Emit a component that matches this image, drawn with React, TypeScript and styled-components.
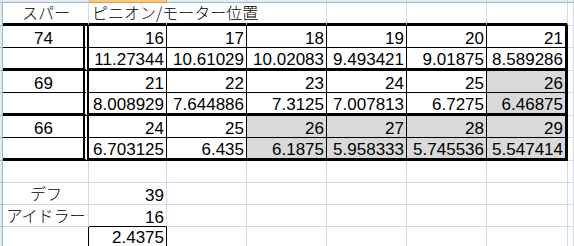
import React from 'react';
import styled, { createGlobalStyle, css } from 'styled-components';

const GlobalStyle = createGlobalStyle`
  html, body { margin: 0; padding: 0; background: #ffffff; }
  body { font-family: "Liberation Sans", "Noto Sans CJK JP", sans-serif; }
`;

type Border = 'grid' | 'thin' | 'thick' | 'double' | 'none';
type Align = 'left' | 'center' | 'right';

interface Spec {
  text?: string;
  align?: Align;
  shade?: boolean;
  bottom?: Border;
  right?: Border;
  jp?: boolean;
}

const GRID = '#d0d7e5';
const HEAD = '#9eb6ce';

const borderCss = (b: Border) => {
  switch (b) {
    case 'thin':
      return '1px solid #000';
    case 'thick':
      return '3px solid #000';
    case 'double':
      return '6px double #000';
    case 'none':
      return '1px solid transparent';
    default:
      return `1px solid ${GRID}`;
  }
};

const Sheet = styled.div`
  display: grid;
  grid-template-columns: 3px 86px 78px 80px 80px 80px 80px 81px 1fr;
  grid-template-rows: 3px 23px 22px 23px 22px 23px 22px 23px 22px 22px 22px 20px;
  width: 574px;
  height: 246px;
  overflow: hidden;
  background: #ffffff;
`;

const ColHead = styled.div<{ $selected?: boolean }>`
  box-sizing: border-box;
  background: ${(p) => (p.$selected ? '#f8c97e' : '#e4ebf4')};
  border-bottom: 1px solid ${(p) => (p.$selected ? '#f29436' : HEAD)};
  border-right: 1px solid ${(p) => (p.$selected ? '#f29436' : '#c3d0e0')};
`;

const RowHead = styled.div`
  box-sizing: border-box;
  background: #e4ebf4;
  border-right: 1px solid ${HEAD};
  border-bottom: 1px solid ${HEAD};
`;

const Cell = styled.div<{
  $align: Align;
  $shade?: boolean;
  $bottom: Border;
  $right: Border;
  $jp?: boolean;
}>`
  box-sizing: border-box;
  display: flex;
  align-items: flex-end;
  justify-content: ${(p) =>
    p.$align === 'left' ? 'flex-start' : p.$align === 'center' ? 'center' : 'flex-end'};
  padding: 0 2px 0 3px;
  background: ${(p) => (p.$shade ? '#d9d9d9' : 'transparent')};
  border-bottom: ${(p) => borderCss(p.$bottom)};
  border-right: ${(p) => borderCss(p.$right)};
  color: #000;
  white-space: nowrap;
  overflow: visible;
  min-width: 0;
  font-size: 17px;
  line-height: 17px;
  ${(p) =>
    p.$jp &&
    css`
      font-family: "Noto Sans CJK JP", sans-serif;
      font-size: 16px;
      font-weight: 300;
      line-height: 16px;
      padding-bottom: 3px;
    `}
`;

const NCOLS = 8; // A..H

const buildRows = (): Spec[][] => {
  const rows: Spec[][] = [];
  const blank = (): Spec[] => Array.from({ length: NCOLS }, () => ({ bottom: 'grid', right: 'grid' }));

  // Row 1
  const r1 = blank();
  for (let c = 0; c < 7; c++) r1[c].bottom = 'thick';
  r1[0] = { ...r1[0], text: 'スパー', align: 'center', jp: true };
  r1[1] = { ...r1[1], text: 'ピニオン/モーター位置', align: 'left', jp: true, right: 'none' };
  r1[2] = { ...r1[2], right: 'none' };
  rows.push(r1);

  const blocks = [
    {
      spur: '74',
      teeth: ['16', '17', '18', '19', '20', '21'],
      ratio: ['11.27344', '10.61029', '10.02083', '9.493421', '9.01875', '8.589286'],
      shade: [false, false, false, false, false, false],
    },
    {
      spur: '69',
      teeth: ['21', '22', '23', '24', '25', '26'],
      ratio: ['8.008929', '7.644886', '7.3125', '7.007813', '6.7275', '6.46875'],
      shade: [false, false, false, false, false, true],
    },
    {
      spur: '66',
      teeth: ['24', '25', '26', '27', '28', '29'],
      ratio: ['6.703125', '6.435', '6.1875', '5.958333', '5.745536', '5.547414'],
      shade: [false, false, true, true, true, true],
    },
  ];

  blocks.forEach((b) => {
    const top = blank();
    const bot = blank();
    [top, bot].forEach((row, i) => {
      for (let c = 0; c < 7; c++) {
        row[c].bottom = i === 0 ? 'thin' : 'thick';
        row[c].right = c === 0 ? 'double' : c === 6 ? 'thick' : 'thin';
      }
    });
    top[0] = { ...top[0], text: b.spur, align: 'center' };
    for (let k = 0; k < 6; k++) {
      top[k + 1] = { ...top[k + 1], text: b.teeth[k], align: 'right', shade: b.shade[k] };
      bot[k + 1] = { ...bot[k + 1], text: b.ratio[k], align: 'right', shade: b.shade[k] };
    }
    rows.push(top, bot);
  });

  // Row 8 empty
  rows.push(blank());
  // Row 9
  const r9 = blank();
  r9[0] = { ...r9[0], text: 'デフ', align: 'center', jp: true };
  r9[1] = { ...r9[1], text: '39', align: 'right' };
  rows.push(r9);
  // Row 10
  const r10 = blank();
  r10[0] = { ...r10[0], text: 'アイドラー', align: 'center', jp: true };
  r10[1] = { ...r10[1], text: '16', align: 'right', bottom: 'thin' };
  rows.push(r10);
  // Row 11 (continues past the bottom edge)
  const r11 = blank().map((s) => ({ ...s, bottom: 'none' as Border }));
  r11[0] = { ...r11[0], right: 'thin' };
  r11[1] = { ...r11[1], text: '2.4375', align: 'right', right: 'thin' };
  rows.push(r11);

  return rows;
};

const ROWS = buildRows();

export default function App() {
  return (
    <>
      <GlobalStyle />
      <Sheet>
        <ColHead />
        {Array.from({ length: NCOLS }, (_, c) => (
          <ColHead key={`h${c}`} $selected={c === 1} />
        ))}
        {ROWS.map((row, r) => (
          <React.Fragment key={`r${r}`}>
            <RowHead />
            {row.map((cell, c) => (
              <Cell
                key={`c${r}-${c}`}
                $align={cell.align ?? 'right'}
                $shade={cell.shade}
                $bottom={cell.bottom ?? 'grid'}
                $right={cell.right ?? 'grid'}
                $jp={cell.jp}
              >
                {cell.text}
              </Cell>
            ))}
          </React.Fragment>
        ))}
      </Sheet>
    </>
  );
}
